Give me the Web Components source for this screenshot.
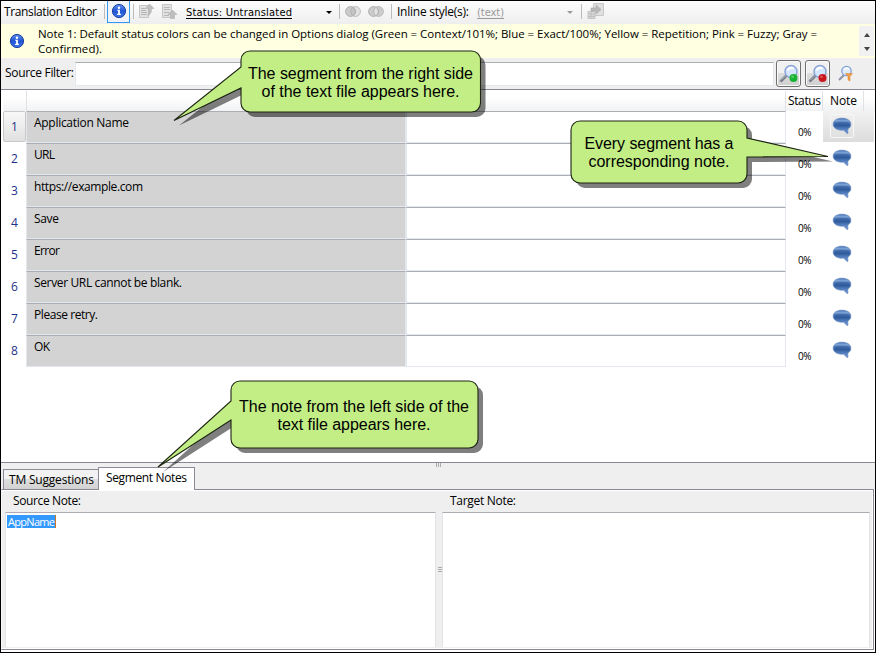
<!DOCTYPE html>
<html lang="en">
<head>
<meta charset="utf-8">
<title>Translation Editor</title>
<style>
html,body{margin:0;padding:0;width:876px;height:653px;overflow:hidden}
body{font:12px/16px "Open Sans","Noto Sans",sans-serif;color:#000}
</style>
</head>
<body>
<app-window></app-window>
<script>
function define(name, html, setup) {
  customElements.define(name, class extends HTMLElement {
    connectedCallback() {
      if (this.shadowRoot) return;
      const root = this.attachShadow({mode: 'open'});
      root.innerHTML = typeof html === 'function' ? html(this) : html;
      if (setup) setup(this, root);
    }
  });
}

// A single line of text tracked to an exact width.
define('fit-text', '<style>:host{display:inline-block;white-space:pre;flex:none}</style><span><slot></slot></span>', (el, root) => {
  const w = +el.getAttribute('w'), n = el.textContent.length;
  el.style.width = w + 'px';
  const span = root.querySelector('span');
  span.style.letterSpacing = '0px';
  const natural = span.getBoundingClientRect().width;
  span.style.letterSpacing = (w - natural) / Math.max(1, n - 1) + 'px';
});

define('info-icon', `<style>:host{display:block;width:16px;height:16px}svg{display:block}</style>
<svg width="16" height="16" viewBox="0 0 16 16"><defs><linearGradient id="g" x2="0" y2="1"><stop stop-color="#5d8df0"/><stop offset=".5" stop-color="#2255d4"/><stop offset="1" stop-color="#3f78ea"/></linearGradient></defs>
<circle cx="8" cy="8" r="6.6" fill="url(#g)" stroke="#1d419f"/><circle cx="8" cy="4.7" r="1.2" fill="#fff"/><path d="M6.2 6.7h2.7v4h1v1.2H6.1v-1.2h1V7.8h-.9z" fill="#fff"/></svg>`);

define('doc-icon', el => `<style>:host{display:block;width:17px;height:17px}svg{display:block}</style>
<svg width="17" height="17" viewBox="0 0 17 17">` + ({
  up: '<path d="M1.500 2.500h9v12h-9z" fill="#e2e2e2" stroke="#c6c6c6"/><path d="M3 5.500h4M3 7.500h5M3 9.500h6M3 11.500h6" stroke="#b4b4b4"/><path d="M11.500 1l4.500 4.500h-2.500c0 4-1 6-3.500 7.500 1-3 .8-5 .5-7.500H7.500z" fill="#bebebe" stroke="#b0b0b0" stroke-width=".6"/>',
  down: '<path d="M1.500 1.500h9v13h-9z" fill="#e2e2e2" stroke="#c6c6c6"/><path d="M3 4.500h6M3 6.500h6M3 9.500h5M3 12.500h5" stroke="#b8b8b8"/><path d="M11.500 7l4.500 4.500h-2.500v4h-4v-4H7z" fill="#bebebe" stroke="#b0b0b0" stroke-width=".6"/>',
  insert: '<path d="M6.500.5h10v12h-10z" fill="#e0e0e0" stroke="#c8c8c8"/><path d="M1 8.500h7v7H1z" fill="#d8d8d8" stroke="#c4c4c4"/><path d="M1 11h7M1 13.500h7M4 9v6" stroke="#c0c0c0"/><path d="M4 5h5V2l5 4.500L9 11V8H4z" fill="#b8b8b8" stroke="#a8a8a8" stroke-width=".6"/>'
}[el.getAttribute('kind')]) + '</svg>');

define('circles-icon', el => `<style>:host{display:block;width:16px;height:11px}svg{display:block}</style>
<svg width="16" height="11" viewBox="0 0 16 11"><circle cx="10.500" cy="5.500" r="4.900" fill="${el.hasAttribute('both') ? '#ccc' : '#e2e2e2'}" stroke="#b9b9b9"/><circle cx="5.500" cy="5.500" r="4.900" fill="#ccc" stroke="#aeaeae"/><path d="M8 1.300a5 5 0 0 1 0 8.400a5 5 0 0 1 0-8.400z" fill="${el.hasAttribute('both') ? '#e4e4e4' : '#c4c4c4'}" stroke="#aaa" stroke-width=".8"/></svg>`);

define('tool-bar', `<style>
:host{display:flex;height:23px;background:linear-gradient(#fdfdfd,#eee);position:relative;align-items:center;box-sizing:border-box;padding:0 0 2px 3px}
.sep{width:1px;height:15px;background:#bcbcbc;flex:none}
.on{width:23px;height:22px;border:1px solid #3399ee;border-top:0;box-sizing:border-box;display:flex;align-items:center;justify-content:center;background:#f0f4f9;flex:none}
.arrow{border:3px solid transparent;border-top:3.500px solid #000;border-bottom:0;flex:none;margin-top:2px}
.st{font-family:"DejaVu Sans Condensed","DejaVu Sans",sans-serif;font-stretch:condensed;font-size:11px;line-height:13px;border-bottom:1px solid #000;height:12px;margin-top:1px}
.dim{color:#999;border-color:#999}
</style>
<fit-text w="93">Translation Editor</fit-text>
<div class="sep" style="margin:0 2px 0 7px"></div>
<div class="on"><info-icon></info-icon></div>
<div class="sep" style="margin-left:3px"></div>
<doc-icon kind="up" style="margin-left:4px"></doc-icon><doc-icon kind="down" style="margin-left:6px"></doc-icon>
<fit-text class="st" w="106" style="margin-left:8px">Status: Untranslated</fit-text>
<span class="arrow" style="margin-left:34px"></span>
<div class="sep" style="margin-left:7px"></div>
<circles-icon style="margin-left:5px"></circles-icon><circles-icon both style="margin-left:7px"></circles-icon>
<div class="sep" style="margin-left:7px"></div>
<fit-text w="72" style="margin-left:5px">Inline style(s):</fit-text>
<fit-text class="st dim" w="27" style="margin-left:8px">(text)</fit-text>
<span class="arrow" style="margin-left:63px;border-top-color:#999"></span>
<div class="sep" style="margin-left:8px"></div>
<doc-icon kind="insert" style="margin-left:5px"></doc-icon>`);

define('note-bar', `<style>
:host{display:flex;height:34px;background:#ffffe1;box-sizing:border-box}
info-icon{margin:9px 0 0 8px}
.t{display:flex;flex-direction:column;margin-left:13px;line-height:15px;padding-top:2px;flex:1;font-size:11.500px}
.t fit-text{height:15px}
.s{width:15px;height:30px;margin:2px 1px 0 0;background:#f1f1f1;display:flex;flex-direction:column;align-items:center;justify-content:space-between;padding:7px 0 5px;box-sizing:border-box}
i{border:3.500px solid transparent}.u{border-bottom:4px solid #444;border-top:0}.d{border-top:4px solid #444;border-bottom:0}
</style><info-icon></info-icon><div class="t"><fit-text w="779">Note 1: Default status colors can be changed in Options dialog (Green = Context/101%; Blue = Exact/100%; Yellow = Repetition; Pink = Fuzzy; Gray =</fit-text><fit-text w="64">Confirmed).</fit-text></div><div class="s"><i class="u"></i><i class="d"></i></div>`);

define('lens-icon', el => `<style>:host{display:block;width:20px;height:20px}svg{display:block}</style>
<svg width="20" height="20" viewBox="0 0 20 20">` + (el.getAttribute('kind') === 'filter'
  ? '<path d="M3 16l5-5" stroke="#8c96a8" stroke-width="2.200"/><circle cx="10.500" cy="7" r="4.700" fill="#dbeaff" stroke="#829ed2" stroke-width="1.300"/><path d="M8 6q2-3 5-1" stroke="#fff" fill="none" stroke-width="1.500"/><path d="M9.500 9.500h7l-2.500 3V17l-2-1v-3.500z" fill="#f2a04b" stroke="#d9832d" stroke-width=".5"/>'
  : `<path d="M1.500 17.500l6-6" stroke="#6f7683" stroke-width="2.600"/><path d="M2 16.500l5-5" stroke="#b8bec8"/><circle cx="12" cy="7.500" r="6" fill="#d3e5ff" stroke="#8ca5d8" stroke-width="1.500"/><path d="M8.500 6.500q2-4 6-2" stroke="#fff" fill="none" stroke-width="2"/><circle cx="14.500" cy="14" r="4" fill="${el.getAttribute('color')}"/><circle cx="13.500" cy="12.700" r="1.300" fill="#fff" opacity=".3"/>`) + '</svg>');

define('filter-bar', `<style>
:host{display:flex;height:31px;background:#efefef;border-bottom:1px solid #868993;box-sizing:content-box;padding-left:4px}
fit-text{margin-top:7px}
.in{width:699px;height:24px;box-sizing:border-box;margin:4px 0 0 1px;background:#fff;border:1px solid #e3e9ef;border-top-color:#abadb3}
.b{width:25px;height:27px;box-sizing:border-box;border:1px solid #707070;border-radius:3px;box-shadow:inset 0 0 0 1px #fafafa;background:linear-gradient(#f1f1f1 48%,#ddd 50%,#d0d0d0);margin:2px 0 0 2px;display:flex;align-items:center;justify-content:center}
.b+.b{margin-left:4px}
.in,.b{flex:none}
lens-icon[kind]{margin:6px 0 0 6px}
</style><fit-text w="69">Source Filter:</fit-text><div class="in"></div><div class="b"><lens-icon color="#18b332"></lens-icon></div><div class="b"><lens-icon color="#c9161c"></lens-icon></div><lens-icon kind="filter"></lens-icon>`);

define('note-bubble', `<style>:host{display:block;width:20px;height:18px}svg{display:block}</style>
<svg width="20" height="18" viewBox="0 0 20 18"><defs><linearGradient id="b" x2="0" y2="1"><stop stop-color="#4673b5"/><stop offset=".15" stop-color="#7ba1d4"/><stop offset=".35" stop-color="#4a78b9"/><stop offset=".5" stop-color="#315b99"/><stop offset=".6" stop-color="#4571b3"/><stop offset="1" stop-color="#7aa3d6"/></linearGradient></defs>
<path d="M10 1.200c5.200 0 8.800 2.300 8.800 5.900 0 2.400-1.100 3.900-3 4.900v4.600c-1.700-.6-2.900-1.800-3.700-3.500C6 13.800 1.200 11.300 1.200 7.100 1.200 3.500 4.800 1.200 10 1.200z" fill="url(#b)" stroke="#5b83bd" stroke-width=".7"/><path d="M2.500 5.500q7-1.500 15 0v3h-15z" fill="#284f8f" opacity=".45"/></svg>`);

define('segment-row', el => `<style>
:host{display:grid;grid-template-columns:23px 380px 380px 37px 51px;height:32px;box-sizing:border-box}
.n{color:#1e3287;display:flex;justify-content:center;align-items:flex-start;padding-top:8px;box-sizing:border-box;height:31px}
.c{border:1px solid #e2e8ee;border-top-color:#abadb3;box-sizing:border-box;height:32px}
.src{background:#d3d3d3;padding:3px 0 0 7px}
.p{font-size:10px;padding:14px 0 0 12px;line-height:15px}
.i{padding:6px 0 0 9px;height:31px;box-sizing:border-box}
:host([selected]) .n{background:linear-gradient(#f8f8f8,#e0e0e0);border:1px solid #c8c8c8;border-radius:2px;padding-top:7px}
:host([selected]) .i{background:linear-gradient(#f2f2f2,#dcdcdc);padding:3px 0 0 7px}
:host([selected]) note-bubble{border:1px solid #f7f7f7;border-radius:2px;padding:2px 1px;width:20px}
</style><div class="n"><fit-text w="7">${el.getAttribute('n')}</fit-text></div><div class="c src"><fit-text w="${el.getAttribute('w')}">${el.getAttribute('text')}</fit-text></div><div class="c"></div><div class="p"><fit-text w="13.500">0%</fit-text></div><div class="i"><note-bubble></note-bubble></div>`);

define('segment-grid', () => `<style>
:host{display:block;height:373px;background:#fff;border-bottom:1px solid #868993;padding-left:2px;box-sizing:border-box}
.h{display:grid;grid-template-columns:24px 759px 37px 41px 10px;height:20px;margin-top:1px;background:linear-gradient(#fff 30%,#f1f2f4);box-sizing:border-box}
.h div{border-right:1px solid #e0e2e5;padding:2px 0 0 1px;display:flex;justify-content:center;box-sizing:border-box}
.h div:last-child{border:0}
</style><div class="h"><div></div><div></div><div><fit-text w="33">Status</fit-text></div><div><fit-text w="27">Note</fit-text></div><div></div></div>` +
[['Application Name',95],['URL',21],['https://example.com',109],['Save',25],['Error',26],['Server URL cannot be blank.',148],['Please retry.',64],['OK',16]]
.map((r,i)=>`<segment-row n="${i+1}" text="${r[0]}" w="${r[1]}"${i?'':' selected'}></segment-row>`).join(''));

define('tab-strip', `<style>
:host{display:flex;height:26px;background:#efefef;padding-left:2px;align-items:flex-end;position:relative;box-sizing:border-box}
div{box-sizing:border-box;border:1px solid #898c95;border-bottom:0;display:flex;justify-content:center}
.a{width:95px;height:20px;border-right:0;background:linear-gradient(#f2f2f2 48%,#dedede 50%,#d2d2d2);padding:2px 0 0 1px}
.b{width:97px;height:23px;background:#fff;padding-top:2px;margin-bottom:-1px;position:relative}
i{position:absolute;left:435px;top:0;width:5px;height:4px;background:repeating-linear-gradient(90deg,#aaa 0 1px,transparent 1px 2px)}
</style><div class="a"><fit-text w="85">TM Suggestions</fit-text></div><div class="b"><fit-text w="81">Segment Notes</fit-text></div><i></i>`);

define('notes-panel', `<style>
:host{display:grid;grid-template-columns:431px 6px 428px;grid-template-rows:21px 1fr;height:161px;box-sizing:border-box;width:873px;border:1px solid #868993;border-left-color:#f7f7f7;padding:1px 2px 2px 3px;background:#efefef;box-shadow:inset 0 1px #fff,inset -1px -1px #fff}
.l{padding:2px 0 0 8px}.l2{grid-column:3}
.a{background:#fff;border:1px solid #e0e3e8;border-top-color:#abadb3;border-bottom:0}
.g{display:flex;align-items:center;justify-content:center;padding-left:1px}
.g i{width:4px;height:5px;margin-top:-20px;background:repeating-linear-gradient(#aaa 0 1px,transparent 1px 2px)}
.s{display:inline-block;background:#39f;color:#fff;height:13px;line-height:13px;margin:2px 0 0 1px;padding:0 0 0 1px;font-size:11px;border-right:1px solid #cc7926}
</style><div class="l"><fit-text w="68">Source Note:</fit-text></div><div class="l l2"><fit-text w="66">Target Note:</fit-text></div>
<div class="a"><span class="s"><fit-text w="47">AppName</fit-text></span></div><div class="g"><i></i></div><div class="a"></div>`);

// Callout balloon laid over the window; "shape" is its outline in local coordinates.
define('call-out', el => {
  const a = k => el.getAttribute(k);
  return `<style>:host{position:absolute;display:block;font:16px/18px "Liberation Sans",Arial,sans-serif}
svg{position:absolute;left:0;top:0;overflow:visible}.t{position:absolute;display:flex;flex-direction:column;align-items:center}</style>
<svg width="1" height="1"><path d="${a('shape')}" transform="translate(5 5)" fill="#000" opacity=".5"/><path d="${a('shape')}" fill="#c2ee85" stroke="#1c2412" stroke-width="1.100"/></svg>
<div class="t" style="left:${a('tx')}px;top:${a('ty')}px;width:${a('tw')}px"><slot></slot></div>`;
});

define('app-window', `<style>
:host{display:flex;flex-direction:column;position:relative;width:876px;height:653px;box-sizing:border-box;border:1px solid #000;background:#fff;overflow:hidden}
tool-bar,note-bar,filter-bar,segment-grid,tab-strip,notes-panel{flex:none}
</style><tool-bar></tool-bar><note-bar></note-bar><filter-bar></filter-bar><segment-grid></segment-grid><tab-strip></tab-strip><notes-panel></notes-panel>
<call-out style="left:239.500px;top:49.500px" tx="0" ty="14.500" tw="240" shape="M9 0H230A9 9 0 0 1 239.500 9V52A9 9 0 0 1 230 61H9A9 9 0 0 1 0 52V37L-67 69.500L0 16V9A9 9 0 0 1 9 0Z"><fit-text w="225">The segment from the right side</fit-text><fit-text w="198">of the text file appears here.</fit-text></call-out>
<call-out style="left:569.500px;top:119.500px" tx="0" ty="14.500" tw="177" shape="M9 0H167A9 9 0 0 1 176 9V17L257 35.500L176 36V53A9 9 0 0 1 167 62H9A9 9 0 0 1 0 53V9A9 9 0 0 1 9 0Z"><fit-text w="149">Every segment has a</fit-text><fit-text w="141">corresponding note.</fit-text></call-out>
<call-out style="left:229.500px;top:379.500px" tx="0" ty="17.500" tw="247" shape="M9 0H238A9 9 0 0 1 247 9V58A9 9 0 0 1 238 67H9A9 9 0 0 1 0 58V39L-73 86L0 20V9A9 9 0 0 1 9 0Z"><fit-text w="230">The note from the left side of the</fit-text><fit-text w="153">text file appears here.</fit-text></call-out>`);
</script>
</body>
</html>
